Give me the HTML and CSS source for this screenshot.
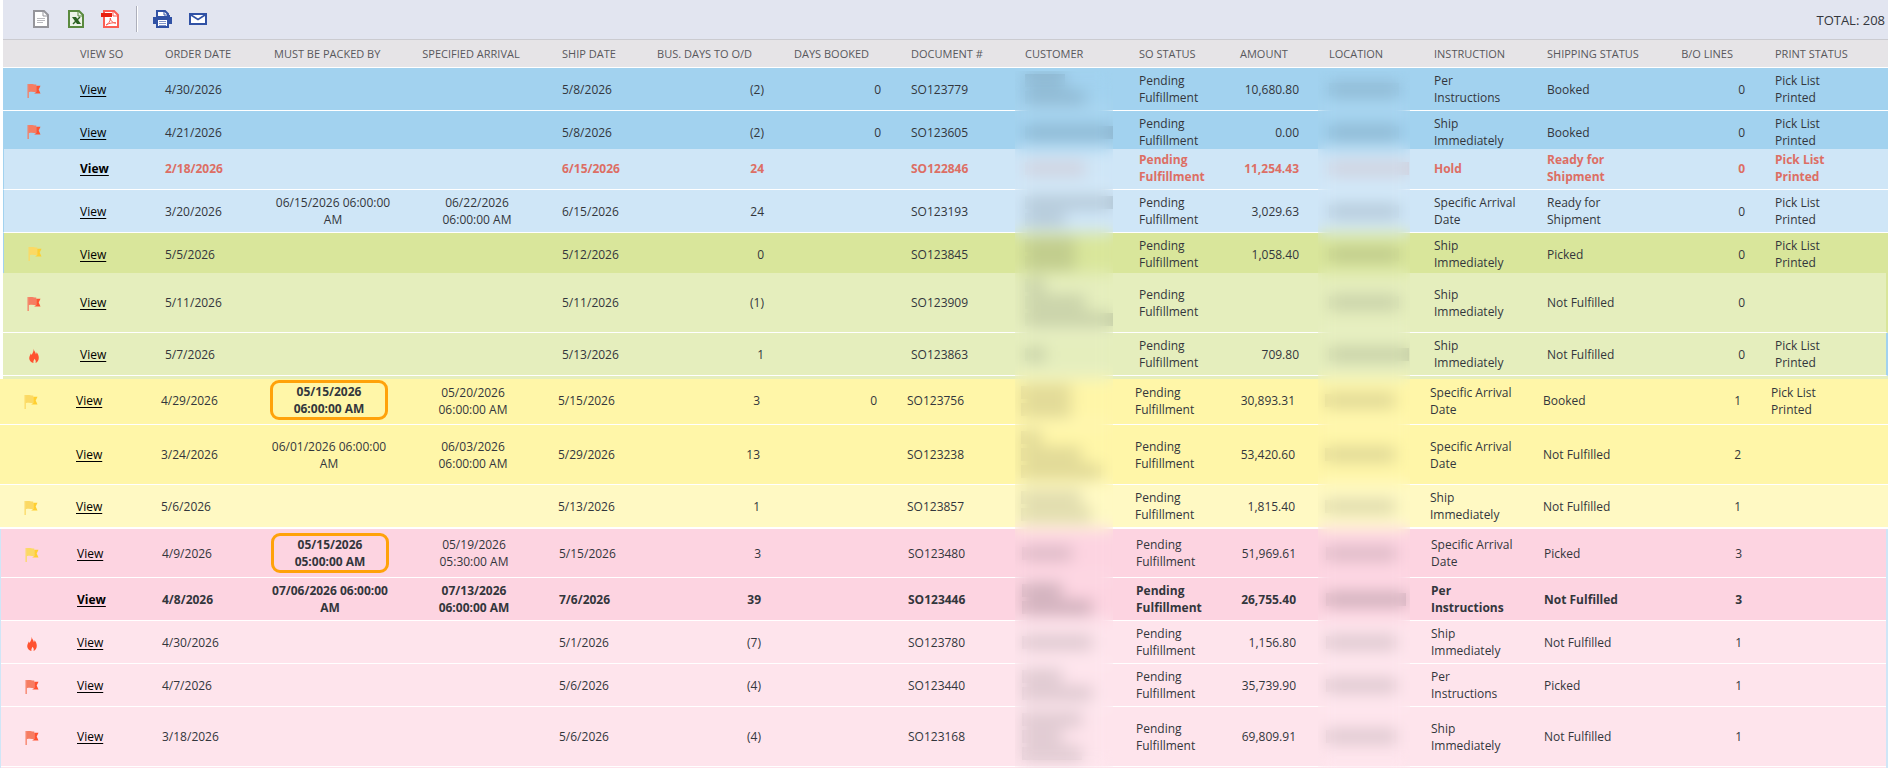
FILE: index.html
```html
<!DOCTYPE html>
<html lang="en">
<head>
<meta charset="utf-8">
<title>Sales Orders</title>
<link rel="stylesheet" href="styles.css">
</head>
<body>
<svg class="defs" aria-hidden="true">
  <symbol id="flag" viewBox="0 0 14 16">
    <path class="pole" d="M.5 1h1.300v14H.5z"/>
    <path class="cloth" d="M1.500 1.200C4 .6 6 1 9.300 1.600v7.700C6 8.700 4 8.600 1.500 9.200z"/>
    <path class="fold" d="M9.300 2.800h4.200l-1.800 3.700 1.800 4H7.200l2.100-1.600z"/>
  </symbol>
  <symbol id="fire" viewBox="0 0 14 16">
    <path d="M6.600.8c.3 2.200 2 3.300 2.300 5.500.5-.6.7-1.200.7-2 1.300 1.500 2.200 3.400 2.200 5.400 0 2.500-1.300 4.300-3.300 5.300.6-1.500.2-2.900-1.100-4.200-.3 1.500-1.500 2.200-.9 4.200-2-.5-4.300-2-4.300-4.800 0-2 1.100-3.200 1.500-4.800.5.500.7 1 .8 1.600C5.800 5.200 6.800 3.200 6.600.8z"/>
  </symbol>
</svg>

<header class="toolbar">
  <button type="button" aria-label="Export CSV"><svg viewBox="0 0 20 20"><path d="M3 2h10l4 4v12H3z" fill="#fff" stroke="#95959b" stroke-width="2"/><path d="M12 2v5h5" fill="none" stroke="#95959b"/><path d="M6 9.500h8M6 11.500h8M6 13.500h6" stroke="#b9b9be"/></svg></button>
  <button type="button" aria-label="Export Excel"><svg viewBox="0 0 20 20"><path d="M3 2h10l4 4v12H3z" fill="#edf3e8" stroke="#5a8a3f" stroke-width="2"/><path d="M12 2v5h5" fill="none" stroke="#5a8a3f"/><path d="M6 8h4l5 7h-4z" fill="#2c6322"/><path d="M14 8l-7 7" stroke="#2c6322" stroke-width="1.500"/></svg></button>
  <button type="button" aria-label="Export PDF"><svg viewBox="0 0 20 20"><path d="M3 2h10l4 4v12H3z" fill="#fff" stroke="#fb5d53" stroke-width="2"/><path d="M12 2v5h5" fill="none" stroke="#fb5d53"/><path d="M0 4h11v4H0z" fill="#e8200f"/><path d="M5 16c3-1.500 4.500-4 4.300-7 .2 3 2 4.800 5.700 5-3.500-.5-6.500 0-10 2z" fill="none" stroke="#fb5d53"/></svg></button>
  <span class="divider"></span>
  <button type="button" aria-label="Print"><svg viewBox="0 0 20 20"><path d="M0 8h3V6h14v2h2v7h-3v2H3v-2H0z" fill="#3152a5"/><path d="M4 7V2h8l3 3v2" fill="#fff" stroke="#3152a5" stroke-width="2"/><path d="M11 2v4h4" fill="none" stroke="#3152a5"/><path d="M4 10h11v8H4z" fill="#fff" stroke="#3152a5" stroke-width="2"/><path d="M6 12.500h7M6 14.500h7M6 16.500h7" stroke="#7f93c8"/></svg></button>
  <button type="button" aria-label="Email"><svg viewBox="0 0 20 20"><path d="M2 5h16v10H2z" fill="#fff" stroke="#3152a5" stroke-width="2"/><path d="M3 6l7 4.500L17 6" fill="none" stroke="#3152a5" stroke-width="1.500"/></svg></button>
  <span class="total">TOTAL: 208</span>
</header>

<main class="sheet">
  <section class="block block-a">
    <table>
      <colgroup><col class="c-icon-wide"><col class="c-view"><col class="c-order"><col class="c-packed"><col class="c-arrival"><col class="c-ship"><col class="c-bus"><col class="c-booked"><col class="c-doc"><col class="c-doc"><col class="c-status"><col class="c-amount"><col class="c-location"><col class="c-instr"><col class="c-shipping"><col class="c-lines"><col class="c-print"><col></colgroup>
      <thead>
        <tr><th></th><th>VIEW SO</th><th>ORDER DATE</th><th class="mid">MUST BE PACKED BY</th><th class="mid">SPECIFIED ARRIVAL</th><th>SHIP DATE</th><th class="num">BUS. DAYS TO O/D</th><th class="num">DAYS BOOKED</th><th>DOCUMENT #</th><th>CUSTOMER</th><th>SO STATUS</th><th class="num">AMOUNT</th><th>LOCATION</th><th>INSTRUCTION</th><th>SHIPPING STATUS</th><th class="num">B/O LINES</th><th>PRINT STATUS</th><th></th></tr>
      </thead>
      <tbody>
        <tr class="blue"><td class="mark"><svg class="red"><use href="#flag"/></svg></td><td><a href="#">View</a></td><td>4/30/2026</td><td></td><td></td><td>5/8/2026</td><td class="num">(2)</td><td class="num">0</td><td>SO123779</td><td><i class="w40"></i><i class="w60"></i></td><td>Pending Fulfillment</td><td class="num">10,680.80</td><td><i class="w70"></i></td><td>Per Instructions</td><td>Booked</td><td class="num">0</td><td>Pick List Printed</td><td></td></tr>
        <tr class="blue cut"><td class="mark"><svg class="red"><use href="#flag"/></svg></td><td><a href="#">View</a></td><td>4/21/2026</td><td></td><td></td><td>5/8/2026</td><td class="num">(2)</td><td class="num">0</td><td>SO123605</td><td><i class="w88"></i></td><td>Pending Fulfillment</td><td class="num">0.00</td><td><i class="w70"></i></td><td>Ship Immediately</td><td>Booked</td><td class="num">0</td><td>Pick List Printed</td><td></td></tr>
        <tr class="sky tight edge hold"><td></td><td><a href="#">View</a></td><td>2/18/2026</td><td></td><td></td><td>6/15/2026</td><td class="num">24</td><td></td><td>SO122846</td><td><i class="w60"></i></td><td>Pending Fulfillment</td><td class="num">11,254.43</td><td><i class="w80"></i></td><td>Hold</td><td>Ready for Shipment</td><td class="num">0</td><td>Pick List Printed</td><td></td></tr>
        <tr class="sky edge"><td></td><td><a href="#">View</a></td><td>3/20/2026</td><td class="mid">06/15/2026 06:00:00 AM</td><td class="mid">06/22/2026 06:00:00 AM</td><td>6/15/2026</td><td class="num">24</td><td></td><td>SO123193</td><td><i class="w88"></i><i class="w40"></i></td><td>Pending Fulfillment</td><td class="num">3,029.63</td><td><i class="w70"></i></td><td>Specific Arrival Date</td><td>Ready for Shipment</td><td class="num">0</td><td>Pick List Printed</td><td></td></tr>
        <tr class="green edge trimmed"><td class="mark"><svg class="yellow"><use href="#flag"/></svg></td><td><a href="#">View</a></td><td>5/5/2026</td><td></td><td></td><td>5/12/2026</td><td class="num">0</td><td></td><td>SO123845</td><td><i class="w50"></i><i class="w50"></i></td><td>Pending Fulfillment</td><td class="num">1,058.40</td><td><i class="w70"></i></td><td>Ship Immediately</td><td>Picked</td><td class="num">0</td><td>Pick List Printed</td><td></td></tr>
        <tr class="lime rim-green"><td class="mark"><svg class="red"><use href="#flag"/></svg></td><td><a href="#">View</a></td><td>5/11/2026</td><td></td><td></td><td>5/11/2026</td><td class="num">(1)</td><td></td><td>SO123909</td><td><i class="w20"></i><i class="w60"></i><i class="w88"></i></td><td>Pending Fulfillment</td><td></td><td><i class="w70"></i></td><td>Ship Immediately</td><td>Not Fulfilled</td><td class="num">0</td><td></td><td></td></tr>
        <tr class="lime rim-blue"><td class="mark"><svg class="red"><use href="#fire"/></svg></td><td><a href="#">View</a></td><td>5/7/2026</td><td></td><td></td><td>5/13/2026</td><td class="num">1</td><td></td><td>SO123863</td><td><i class="w20"></i></td><td>Pending Fulfillment</td><td class="num">709.80</td><td><i class="w80"></i></td><td>Ship Immediately</td><td>Not Fulfilled</td><td class="num">0</td><td>Pick List Printed</td><td></td></tr>
      </tbody>
    </table>
    <div class="stub-lime"></div>
  </section>

  <section class="block">
    <table>
      <colgroup><col class="c-icon"><col class="c-view"><col class="c-order"><col class="c-packed"><col class="c-arrival"><col class="c-ship"><col class="c-bus"><col class="c-booked"><col class="c-doc"><col class="c-doc"><col class="c-status"><col class="c-amount"><col class="c-location"><col class="c-instr"><col class="c-shipping"><col class="c-lines"><col class="c-print"><col></colgroup>
      <tbody>
        <tr class="yellow raised"><td class="mark"><svg class="yellow"><use href="#flag"/></svg></td><td><a href="#">View</a></td><td>4/29/2026</td><td class="mid due"><strong>05/15/2026 06:00:00 AM</strong></td><td class="mid">05/20/2026 06:00:00 AM</td><td>5/15/2026</td><td class="num">3</td><td class="num">0</td><td>SO123756</td><td><i class="w50"></i><i class="w50"></i></td><td>Pending Fulfillment</td><td class="num">30,893.31</td><td><i class="w70"></i></td><td>Specific Arrival Date</td><td>Booked</td><td class="num">1</td><td>Pick List Printed</td><td></td></tr>
        <tr class="yellow"><td></td><td><a href="#">View</a></td><td>3/24/2026</td><td class="mid">06/01/2026 06:00:00 AM</td><td class="mid">06/03/2026 06:00:00 AM</td><td>5/29/2026</td><td class="num">13</td><td></td><td>SO123238</td><td><i class="w20"></i><i class="w60"></i><i class="w80"></i></td><td>Pending Fulfillment</td><td class="num">53,420.60</td><td><i class="w70"></i></td><td>Specific Arrival Date</td><td>Not Fulfilled</td><td class="num">2</td><td></td><td></td></tr>
        <tr class="cream"><td class="mark"><svg class="yellow"><use href="#flag"/></svg></td><td><a href="#">View</a></td><td>5/6/2026</td><td></td><td></td><td>5/13/2026</td><td class="num">1</td><td></td><td>SO123857</td><td><i class="w60"></i><i class="w70"></i></td><td>Pending Fulfillment</td><td class="num">1,815.40</td><td><i class="w70"></i></td><td>Ship Immediately</td><td>Not Fulfilled</td><td class="num">1</td><td></td><td></td></tr>
      </tbody>
    </table>
  </section>

  <section class="block block-c">
    <table>
      <colgroup><col class="c-icon"><col class="c-view"><col class="c-order"><col class="c-packed"><col class="c-arrival"><col class="c-ship"><col class="c-bus"><col class="c-booked"><col class="c-doc"><col class="c-doc"><col class="c-status"><col class="c-amount"><col class="c-location"><col class="c-instr"><col class="c-shipping"><col class="c-lines"><col class="c-print"><col></colgroup>
      <tbody>
        <tr class="pink"><td class="mark"><svg class="yellow"><use href="#flag"/></svg></td><td><a href="#">View</a></td><td>4/9/2026</td><td class="mid"><strong>05/15/2026 05:00:00 AM</strong></td><td class="mid">05/19/2026 05:30:00 AM</td><td>5/15/2026</td><td class="num">3</td><td></td><td>SO123480</td><td><i class="w50"></i></td><td>Pending Fulfillment</td><td class="num">51,969.61</td><td><i class="w70"></i></td><td>Specific Arrival Date</td><td>Picked</td><td class="num">3</td><td></td><td></td></tr>
        <tr class="pink bold"><td></td><td><a href="#">View</a></td><td>4/8/2026</td><td class="mid">07/06/2026 06:00:00 AM</td><td class="mid">07/13/2026 06:00:00 AM</td><td>7/6/2026</td><td class="num">39</td><td></td><td>SO123446</td><td><i class="w40"></i><i class="w70"></i></td><td>Pending Fulfillment</td><td class="num">26,755.40</td><td><i class="w80"></i></td><td>Per Instructions</td><td>Not Fulfilled</td><td class="num">3</td><td></td><td></td></tr>
        <tr class="rose"><td class="mark"><svg class="red"><use href="#fire"/></svg></td><td><a href="#">View</a></td><td>4/30/2026</td><td></td><td></td><td>5/1/2026</td><td class="num">(7)</td><td></td><td>SO123780</td><td><i class="w70"></i></td><td>Pending Fulfillment</td><td class="num">1,156.80</td><td><i class="w70"></i></td><td>Ship Immediately</td><td>Not Fulfilled</td><td class="num">1</td><td></td><td></td></tr>
        <tr class="rose"><td class="mark"><svg class="red"><use href="#flag"/></svg></td><td><a href="#">View</a></td><td>4/7/2026</td><td></td><td></td><td>5/6/2026</td><td class="num">(4)</td><td></td><td>SO123440</td><td><i class="w40"></i><i class="w70"></i></td><td>Pending Fulfillment</td><td class="num">35,739.90</td><td><i class="w70"></i></td><td>Per Instructions</td><td>Picked</td><td class="num">1</td><td></td><td></td></tr>
        <tr class="rose"><td class="mark"><svg class="red"><use href="#flag"/></svg></td><td><a href="#">View</a></td><td>3/18/2026</td><td></td><td></td><td>5/6/2026</td><td class="num">(4)</td><td></td><td>SO123168</td><td><i class="w60"></i><i class="w40"></i><i class="w60"></i></td><td>Pending Fulfillment</td><td class="num">69,809.91</td><td><i class="w70"></i></td><td>Ship Immediately</td><td>Not Fulfilled</td><td class="num">1</td><td></td><td></td></tr>
      </tbody>
    </table>
    <div class="stub-rose"></div>
  </section>

  <div class="veil veil-customer"></div>
  <div class="veil veil-location"></div>
</main>
</body>
</html>
```
FILE: styles.css
```css
body {
  margin: 0;
  background: #fff;
  color: #33363c;
  font: 12px/17px "Open Sans", "Noto Sans", sans-serif;
  overflow: hidden;
}

.defs {
  display: none;
}

/* Toolbar */
.toolbar {
  display: flex;
  align-items: center;
  gap: 15px;
  height: 32px;
  margin-left: 3px;
  padding: 3px 3px 4px 28px;
  background: #e2e5f0;
  border-bottom: 1px solid #cbcbd0;
}

.toolbar button {
  flex: none;
  width: 20px;
  height: 20px;
  padding: 0;
  border: 0;
  background: none;
  cursor: pointer;
}

.toolbar button svg {
  display: block;
  width: 20px;
  height: 20px;
}

.divider {
  width: 1px;
  height: 26px;
  background: #adafbb;
  border-right: 1px solid #fff;
}

.total {
  margin-left: auto;
  padding-top: 3px;
  font-size: 13px;
  white-space: nowrap;
}

/* Order list */
.sheet {
  position: relative;
}

.block-a {
  padding-left: 3px;
}

.block-c {
  padding: 0 2px 0 1px;
  background: #cfe6f7;
}

table {
  width: 100%;
  table-layout: fixed;
  border-spacing: 0;
}

.c-icon-wide { width: 62px; }
.c-icon { width: 61px; }
.c-view { width: 85px; }
.c-order { width: 109px; }
.c-packed { width: 148px; }
.c-arrival { width: 140px; }
.c-ship { width: 95px; }
.c-bus { width: 137px; }
.c-booked { width: 117px; }
.c-doc { width: 114px; }
.c-status { width: 101px; }
.c-amount { width: 89px; }
.c-location { width: 105px; }
.c-instr { width: 113px; }
.c-shipping { width: 134px; }
.c-lines { width: 94px; }
.c-print { width: 102px; }

th {
  height: 27px;
  padding: 0 15px;
  border-bottom: 1px solid #fff;
  background: #e6e4e7;
  color: #58585c;
  font-size: 11px;
  font-weight: 400;
  text-align: left;
  white-space: nowrap;
}

th.mid,
th.num {
  padding-right: 27px;
}

td {
  padding: 4px 15px;
  border-bottom: 1px solid #fff;
  vertical-align: middle;
}

.mid { text-align: center; }
.num { text-align: right; }

.mark {
  padding: 0;
  text-align: center;
}

.mark svg {
  display: block;
  width: 14px;
  height: 16px;
  margin: 3px auto 0;
}

.mark .red { fill: #ff5230; --cloth: #f67d62; }
.mark .yellow { fill: #ffcf31; --cloth: #fbd964; }
.cloth, .pole { fill: var(--cloth); }

td a {
  color: #000;
  text-decoration: underline;
  text-underline-offset: 2px;
}

td strong {
  display: block;
  padding: 0 16px;
  border: 3px solid #ffa20a;
  border-radius: 9px;
}

/* Row tints */
.blue { background: #a2d2ef; }
.sky { background: #cfe6f7; }
.green { background: #d9e69b; }
.lime { background: #e5eebd; }
tr.yellow { background: #fff6a8; }
.cream { background: #fff9c3; }
.pink { background: #fdd4e1; }
.rose { background: #fee4ec; }

.bold,
.hold {
  font-weight: 700;
}

.hold { color: #dd6e64; }

/* Row edges */
.cut td { padding-bottom: 0; border-bottom: 0; }
.tight td { padding-top: 2px; }
.trimmed td { padding-bottom: 2px; border-bottom: 0; }
.raised td { padding-top: 3px; padding-bottom: 5px; }
.raised .due { padding-top: 1px; padding-bottom: 4px; }
.cream td { border-bottom-width: 2px; }
.edge td:first-child { border-left: 1px solid #a2d2ef; }
.rim-green td:last-child { border-right: 2px solid #d9e69b; }
.rim-blue td:last-child { border-right: 2px solid #a2d2ef; }

.stub-lime {
  height: 3px;
  background: #e5eebd;
}

.stub-rose {
  height: 1px;
  background: #fee4ec;
}

/* Masked values */
td i {
  display: block;
  height: 13px;
  margin: 2px 0;
  background: currentColor;
  opacity: .18;
}

td i + i { margin-top: 4px; }
.bold i { opacity: .26; }

.w20 { width: 20px; }
.w40 { width: 40px; }
.w50 { width: 50px; }
.w60 { width: 60px; }
.w70 { width: 70px; }
.w80 { width: 80px; }
.w88 { width: 88px; }

.veil {
  position: absolute;
  top: 31px;
  bottom: 0;
  backdrop-filter: blur(8px);
}

.veil-customer {
  left: 1015px;
  width: 98px;
}

.veil-location {
  left: 1318px;
  width: 92px;
}
```
